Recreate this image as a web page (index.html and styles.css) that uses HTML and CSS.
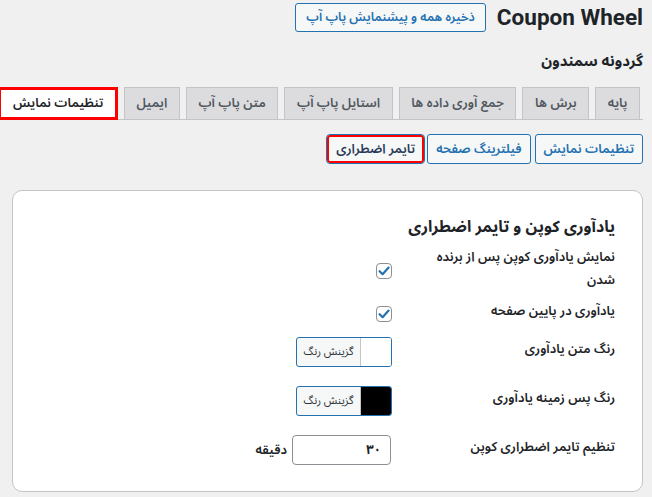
FILE: index.html
```html
<!DOCTYPE html>
<html lang="fa" dir="rtl">
<head>
<meta charset="utf-8">
<title>Coupon Wheel</title>
<link rel="stylesheet" href="styles.css">
</head>
<body>
<div class="wrap">
  <div class="head-row">
    <h1 class="page-title">Coupon Wheel</h1>
    <button class="btn">ذخیره همه و پیشنمایش پاپ آپ</button>
  </div>
  <h2 class="subtitle">گردونه سمندون</h2>
  <nav class="tabs">
    <a class="tab">پایه</a>
    <a class="tab">برش ها</a>
    <a class="tab">جمع آوری داده ها</a>
    <a class="tab">استایل پاپ آپ</a>
    <a class="tab">متن پاپ آپ</a>
    <a class="tab">ایمیل</a>
    <a class="tab tab-active">تنظیمات نمایش</a>
  </nav>
  <div class="subtabs">
    <button class="btn">تنظیمات نمایش</button>
    <button class="btn">فیلترینگ صفحه</button>
    <button class="btn btn-current">تایمر اضطراری</button>
  </div>
  <section class="card">
    <h3 class="card-title">یادآوری کوپن و تایمر اضطراری</h3>
    <div class="form">
      <div class="row row-first">
        <div class="label">نمایش یادآوری کوپن پس از برنده شدن</div>
        <div class="field"><span class="check"><svg viewBox="0 0 16 16" width="16" height="16"><path d="M3.6 8.2 L6.6 11.2 L12.6 4.6" fill="none" stroke="#2271b1" stroke-width="2.2" stroke-linecap="round" stroke-linejoin="round"/></svg></span></div>
      </div>
      <div class="row row-check2">
        <div class="label">یادآوری در پایین صفحه</div>
        <div class="field"><span class="check"><svg viewBox="0 0 16 16" width="16" height="16"><path d="M3.6 8.2 L6.6 11.2 L12.6 4.6" fill="none" stroke="#2271b1" stroke-width="2.2" stroke-linecap="round" stroke-linejoin="round"/></svg></span></div>
      </div>
      <div class="row row-after-check">
        <div class="label">رنگ متن یادآوری</div>
        <div class="field"><span class="picker"><span class="swatch swatch-white"></span><span class="picker-text">گزینش رنگ</span></span></div>
      </div>
      <div class="row">
        <div class="label">رنگ پس زمینه یادآوری</div>
        <div class="field"><span class="picker"><span class="swatch swatch-black"></span><span class="picker-text">گزینش رنگ</span></span></div>
      </div>
      <div class="row">
        <div class="label">تنظیم تایمر اضطراری کوپن</div>
        <div class="field"><span class="num">۳۰</span><span class="unit">دقیقه</span></div>
      </div>
    </div>
  </section>
</div>
</body>
</html>
```
FILE: styles.css
```css
* { box-sizing: border-box; }
html, body { margin: 0; padding: 0; }
body {
  background: #f0f0f1;
  color: #1d2327;
  font-family: "Noto Sans Arabic", "DejaVu Sans", sans-serif;
  font-size: 13px;
  width: 652px;
  height: 497px;
  overflow: hidden;
}
.wrap {
  padding: 3px 9px 0 2px;
}
.head-row {
  display: flex;
  align-items: center;
  gap: 11px;
  height: 28px;
}
.page-title {
  margin: 0;
  font-family: "Roboto", "Liberation Sans", sans-serif;
  font-size: 22.5px;
  font-weight: 700;
  color: #1d2327;
}
.btn {
  font-family: inherit;
  font-size: 12.5px;
  font-weight: 600;
  color: #2271b1;
  background: #f6f7f7;
  border: 1px solid #2271b1;
  border-radius: 3px;
  height: 29px;
  padding: 0 10px;
  line-height: 27px;
  cursor: pointer;
}
.subtitle {
  margin: 19px 0 0;
  font-size: 15px;
  font-weight: 700;
  height: 22px;
  line-height: 22px;
}
.tabs {
  display: flex;
  gap: 6px;
  margin-top: 15px;
  padding-right: 3px;
  border-bottom: 1px solid #c3c4c7;
  height: 33px;
  align-items: flex-end;
}
.tab {
  display: block;
  height: 32px;
  line-height: 30px;
  padding: 0 11.6px;
  background: #dcdcde;
  border: 1px solid #c3c4c7;
  border-bottom: none;
  color: #50575e;
  font-size: 13px;
  font-weight: 600;
  white-space: nowrap;
}
.tab-active {
  background: #fff;
  color: #1d2327;
  border: 3px solid #ff0000;
  line-height: 26px;
  height: 33px;
  margin-bottom: -1px;
}
.subtabs {
  display: flex;
  gap: 4px;
  margin-top: 14px;
}
.subtabs .btn {
  height: 30px;
  padding: 0 8px;
  font-size: 13px;
}
.subtabs .btn-current {
  border: 1px solid #2271b1;
  box-shadow: inset 0 0 0 2px #ff0000;
  border-radius: 4px;
  color: #2a3b5a;
  margin-right: -2px;
  padding: 0 9px;
}
.card {
  margin: 26px 0 0 10px;
  background: #fff;
  border: 1px solid #c3c4c7;
  border-radius: 10px;
  height: 302px;
  padding: 24px 27px 0 0;
}
.card-title {
  margin: 0;
  font-size: 16px;
  font-weight: 700;
  line-height: 24px;
}
.form {
  display: flex;
  flex-direction: column;
  margin-top: 7px;
}
.row {
  display: flex;
  align-items: center;
  min-height: 30px;
  margin-top: 19px;
}
.row-first {
  margin-top: 0;
  min-height: 46px;
}
.row-check2 { margin-top: 4px; }
.row-after-check { margin-top: 8px; }
.label {
  width: 190px;
  padding-bottom: 5px;
  font-weight: 600;
  font-size: 13px;
  line-height: 23px;
  color: #1d2327;
}
.row-first .label { padding-bottom: 3px; }
.field {
  display: flex;
  align-items: center;
  gap: 5px;
  padding-right: 33px;
}
.check {
  width: 16px;
  height: 16px;
  border: 1px solid #8c8f94;
  border-radius: 4px;
  display: flex;
  align-items: center;
  justify-content: center;
  background: #fff;
}
.check svg { display: block; margin: -1px; }
.picker {
  display: flex;
  width: 96px;
  height: 30px;
  border: 1px solid #2271b1;
  border-radius: 3px;
  overflow: hidden;
  background: #f6f7f7;
}
.swatch {
  width: 31px;
  border-left: 1px solid #c3c4c7;
}
.swatch-white { background: #fff; }
.swatch-black { background: #000; }
.picker-text {
  flex: 1;
  text-align: center;
  line-height: 28px;
  font-size: 11px;
  color: #2c3338;
}
.num {
  width: 99px;
  height: 30px;
  border: 1px solid #8c8f94;
  border-radius: 4px;
  padding: 0 9px;
  line-height: 28px;
  font-weight: 700;
  font-size: 13px;
  margin-right: 1px;
}
.unit {
  font-weight: 600;
}
```
